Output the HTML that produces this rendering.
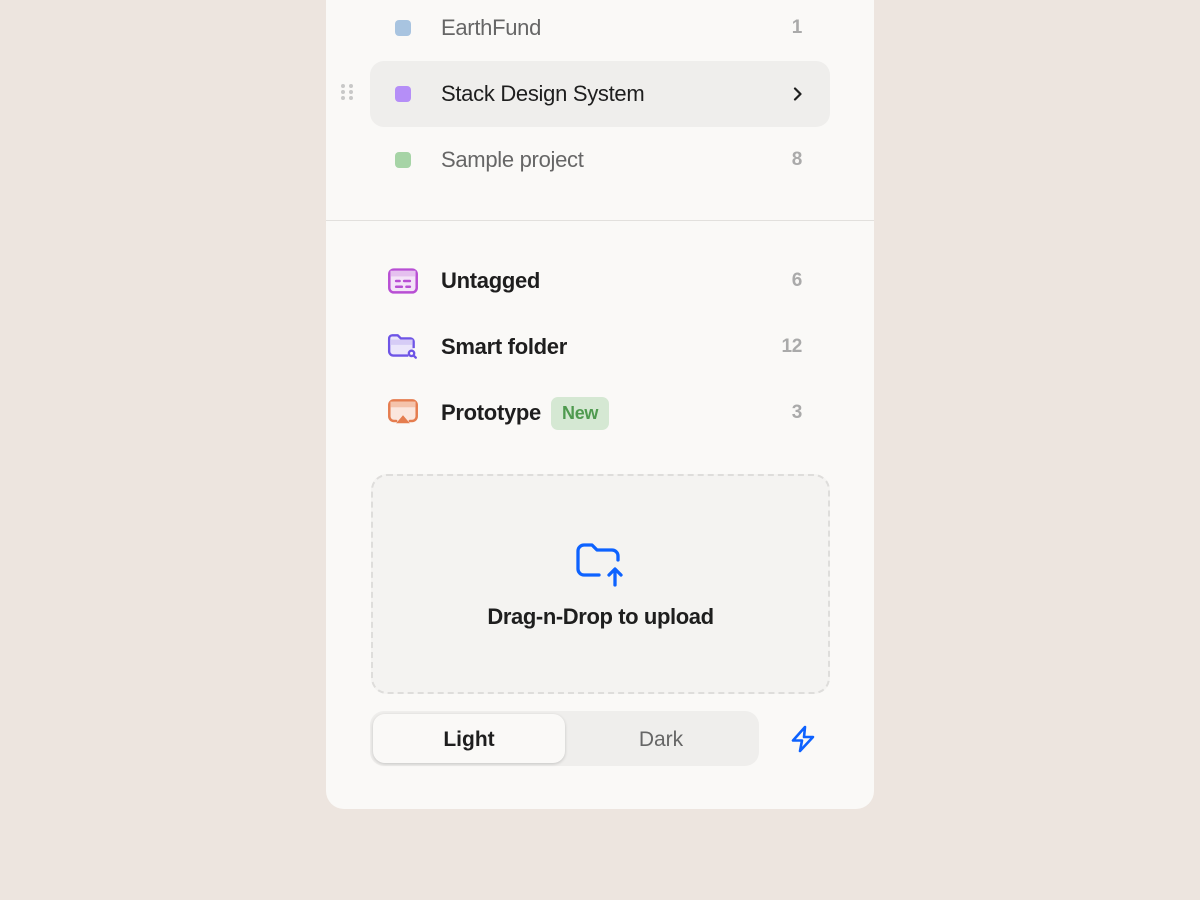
<!DOCTYPE html>
<html><head><style>
*{margin:0;padding:0;box-sizing:border-box}
body{width:1200px;height:900px;background:#ede5df;font-family:"Liberation Sans",sans-serif;position:relative;overflow:hidden}
.panel{position:absolute;left:326px;top:-30px;width:548px;height:839px;background:#faf9f7;border-radius:18px}
.row{position:absolute;left:370px;width:460px;height:66px;display:flex;align-items:center;font-size:22px;letter-spacing:-0.3px}
.row .lbl{position:absolute;left:71px}
.row .cnt{position:absolute;right:28px;color:#aaa;font-weight:bold;font-size:19px}
.sq{position:absolute;left:25px;width:16px;height:16px;border-radius:4px}
.ic{position:absolute;left:17px}
</style></head><body>
<div class="panel"></div>
<div class="row" style="top:-5px"><div class="sq" style="background:#a8c4e0"></div><span class="lbl" style="color:#666">EarthFund</span><span class="cnt">1</span></div>
<div class="row" style="top:61px;background:#efeeec;border-radius:14px"><div class="sq" style="background:#b58ef7"></div><span class="lbl" style="color:#1e1e1e">Stack Design System</span>
<svg style="position:absolute;right:26px" width="12" height="14" viewBox="0 0 12 14"><path d="M3 1.5 8.5 7 3 12.5" stroke="#1e1e1e" stroke-width="2.2" fill="none" stroke-linecap="round" stroke-linejoin="round"/></svg></div>
<svg style="position:absolute;left:340px;top:83px" width="14" height="18"><g fill="#c8c8c8"><circle cx="3" cy="3" r="2"/><circle cx="11" cy="3" r="2"/><circle cx="3" cy="9" r="2"/><circle cx="11" cy="9" r="2"/><circle cx="3" cy="15" r="2"/><circle cx="11" cy="15" r="2"/></g></svg>
<div class="row" style="top:127px"><div class="sq" style="background:#a6d4a6"></div><span class="lbl" style="color:#666">Sample project</span><span class="cnt">8</span></div>
<div style="position:absolute;left:326px;top:220px;width:548px;height:1px;background:#e2e0dd"></div>

<div class="row" style="top:248px;font-weight:bold;color:#1e1e1e">
<svg class="ic" width="32" height="28" viewBox="0 0 28 24"><rect x="2" y="2" width="24" height="20" rx="4" fill="#f4e3f8" stroke="#b84fd4" stroke-width="2.2"/><rect x="3" y="3" width="22" height="5" fill="#e5c0ef"/><path d="M8 12h3M15 12h5M8 17h5M17 17h3" stroke="#b84fd4" stroke-width="2.2" stroke-linecap="round"/></svg>
<span class="lbl">Untagged</span><span class="cnt">6</span></div>
<div class="row" style="top:314px;font-weight:bold;color:#1e1e1e">
<svg class="ic" width="32" height="28" viewBox="0 0 30 26"><path d="M20 21H6a4 4 0 0 1-4-4V5a3 3 0 0 1 3-3h5l3 3h9a3 3 0 0 1 3 3v6" fill="#ebe6fb" stroke="#6e55e6" stroke-width="2.2" stroke-linejoin="round"/><rect x="3" y="6" width="21" height="5" fill="#d6ccf6"/><circle cx="23" cy="19" r="2.5" fill="none" stroke="#6e55e6" stroke-width="2.2"/><path d="M25 21l2 2" stroke="#6e55e6" stroke-width="2.2" stroke-linecap="round"/></svg>
<span class="lbl">Smart folder</span><span class="cnt">12</span></div>
<div class="row" style="top:380px;font-weight:bold;color:#1e1e1e">
<svg class="ic" width="32" height="30" viewBox="0 0 28 26"><path d="M8 20H6a4 4 0 0 1-4-4V6a4 4 0 0 1 4-4h16a4 4 0 0 1 4 4v10a4 4 0 0 1-4 4h-2" fill="#fbe7de" stroke="#e57d4f" stroke-width="2.2" stroke-linecap="round"/><rect x="3" y="3" width="22" height="5" fill="#f4c3ab"/><path d="M14 15l6 7H8z" fill="#e57d4f"/></svg>
<span class="lbl">Prototype</span>
<span style="position:absolute;left:181px;top:17px;height:33px;padding:0 11px;background:#d5e8d3;color:#4f9a4f;border-radius:7px;font-size:18px;line-height:33px">New</span>
<span class="cnt">3</span></div>

<div style="position:absolute;left:371px;top:474px;width:459px;height:220px;background:#f4f3f1;border:2px dashed #dedddb;border-radius:16px"></div>
<svg style="position:absolute;left:575px;top:541px" width="50" height="46" viewBox="0 0 50 46"><path d="M24 34H9a6 6 0 0 1-6-6V10a6 6 0 0 1 6-6h8l5 5h15a6 6 0 0 1 6 6v4" fill="none" stroke="#0d62ff" stroke-width="3.3" stroke-linecap="round" stroke-linejoin="round"/><path d="M40 44V29M34 34l6-6 6 6" fill="none" stroke="#0d62ff" stroke-width="3.3" stroke-linecap="round" stroke-linejoin="round"/></svg>
<div style="position:absolute;left:371px;width:459px;top:604px;text-align:center;font-weight:bold;font-size:22px;color:#1e1e1e;letter-spacing:-0.4px">Drag-n-Drop to upload</div>

<div style="position:absolute;left:370px;top:711px;width:389px;height:55px;background:#efeeec;border-radius:14px"></div>
<div style="position:absolute;left:373px;top:714px;width:192px;height:49px;background:#faf9f7;border-radius:12px;box-shadow:0 1px 3px rgba(0,0,0,.18);text-align:center;line-height:51px;font-weight:bold;font-size:21px;color:#1e1e1e">Light</div>
<div style="position:absolute;left:565px;top:714px;width:192px;height:49px;text-align:center;line-height:51px;font-size:21px;color:#666">Dark</div>
<svg style="position:absolute;left:788px;top:724px" width="30" height="30" viewBox="0 0 30 30"><path d="M17 3 5 16.5h9L12 27l13-14h-9z" fill="none" stroke="#0d62ff" stroke-width="2.6" stroke-linejoin="round"/></svg>
</body></html>
